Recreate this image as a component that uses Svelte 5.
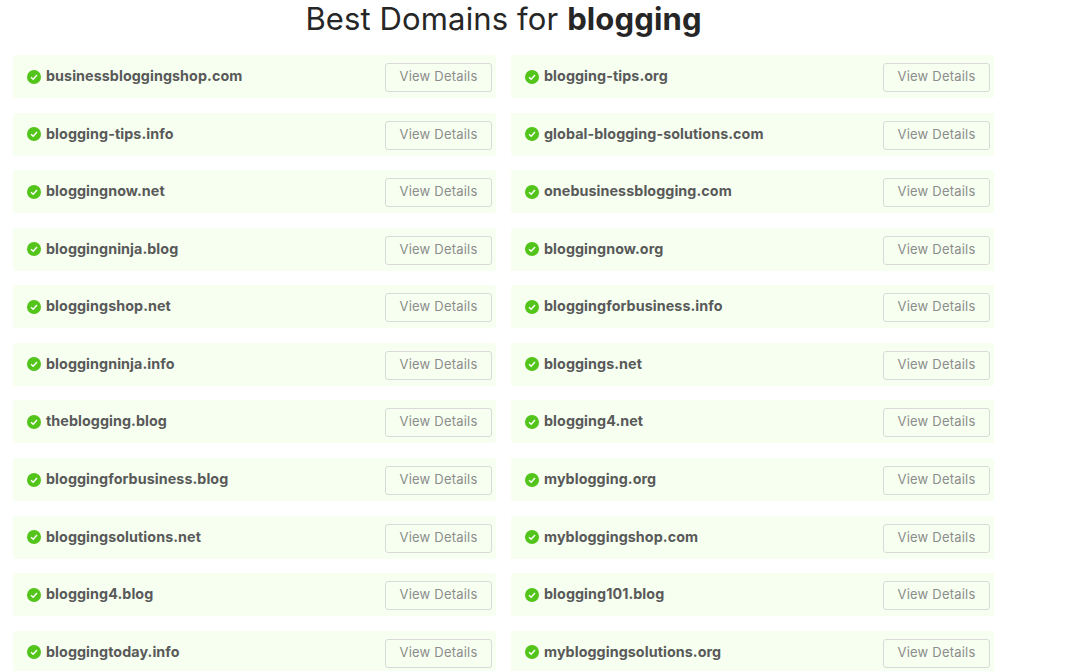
<script>
  const domains = [
    ['businessbloggingshop.com', 'blogging-tips.org'],
    ['blogging-tips.info', 'global-blogging-solutions.com'],
    ['bloggingnow.net', 'onebusinessblogging.com'],
    ['bloggingninja.blog', 'bloggingnow.org'],
    ['bloggingshop.net', 'bloggingforbusiness.info'],
    ['bloggingninja.info', 'bloggings.net'],
    ['theblogging.blog', 'blogging4.net'],
    ['bloggingforbusiness.blog', 'myblogging.org'],
    ['bloggingsolutions.net', 'mybloggingshop.com'],
    ['blogging4.blog', 'blogging101.blog'],
    ['bloggingtoday.info', 'mybloggingsolutions.org']
  ].flat();
</script>

<div class="page">
  <h1>Best Domains for <b>blogging</b></h1>
  <div class="grid">
    {#each domains as name}
      <div class="row">
        <svg class="check" viewBox="0 0 14 14" width="14" height="14" aria-hidden="true">
          <circle cx="7" cy="7" r="7" fill="#52c41a" />
          <path d="M4 7.2 6.2 9.3 10 5" fill="none" stroke="#fff" stroke-width="1.4" />
        </svg>
        <span class="name">{name}</span>
        <button>View Details</button>
      </div>
    {/each}
  </div>
</div>

<style>
  :global(body) {
    background: #fff;
    font-family: Inter, "Open Sans", sans-serif;
  }

  .page {
    height: 671px;
    overflow: hidden;
    width: 1080px;
  }

  h1 {
    margin: 0;
    width: 1007px;
    text-align: center;
    font-size: 31px;
    line-height: 38px;
    font-weight: 400;
    letter-spacing: 0.13px;
    color: #262626;
  }

  h1 b {
    font-weight: 700;
  }

  .grid {
    display: grid;
    grid-template-columns: 483px 483px;
    grid-auto-rows: 43px;
    column-gap: 15px;
    row-gap: 14.58px;
    padding: 17px 0 0 13px;
  }

  .row {
    display: flex;
    align-items: center;
    padding: 0 3px 0 14px;
    background: #f6fff0;
    border-radius: 2px;
  }

  .check {
    flex: none;
    margin-right: 5px;
  }

  .name {
    flex: 1;
    margin-bottom: 2px;
    font-size: 14.3px;
    font-weight: 700;
    letter-spacing: 0.08px;
    color: #595959;
  }

  button {
    width: 107px;
    height: 29px;
    margin: 2px 1px 0 0;
    padding: 0 0 3px;
    background: transparent;
    border: 1px solid #d9d9d9;
    border-radius: 3px;
    font: 400 13px Inter, sans-serif;
    letter-spacing: 0.2px;
    color: #8c8c8c;
  }
</style>
